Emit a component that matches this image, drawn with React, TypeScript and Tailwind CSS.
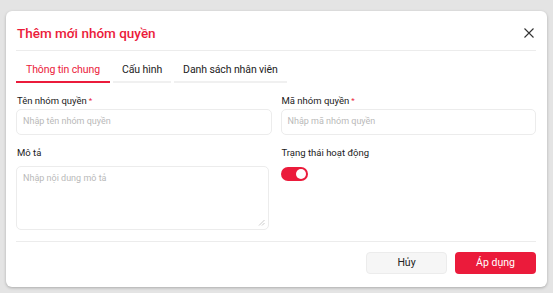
import React from "react";

export default function App() {
  return (
    <div
      className="w-[553px] h-[293px] bg-[#e4e4e4] pt-[11px] pl-[6px]"
      style={{ fontFamily: "Roboto, 'Noto Sans', sans-serif" }}
    >
      <div className="w-[541px] h-[276px] bg-white rounded-[6px] shadow-[0_1px_3px_rgba(0,0,0,0.25)] pl-[10px] pr-[11px] flex flex-col">
        <div className="h-[40px] flex items-center justify-between border-b border-[#ececec] pt-[5px]">
          <div className="text-[13.5px] font-medium text-[#eb1b3b] ml-[1px]">Thêm mới nhóm quyền</div>
          <button className="w-[10px] h-[10px] mr-[2px] text-[#333]">
            <svg viewBox="0 0 10 10" width="10" height="10" fill="none" stroke="currentColor" strokeWidth="1.1">
              <path d="M0.5 0.5 L9.5 9.5 M9.5 0.5 L0.5 9.5" />
            </svg>
          </button>
        </div>
        <div className="flex gap-[3px] mt-[7px]">
          <div className="px-[10px] h-[25px] flex items-center border-b-2 border-[#eb1b3b] text-[10.5px] tracking-[-0.1px] text-[#eb1b3b]">Thông tin chung</div>
          <div className="px-[9px] h-[25px] flex items-center border-b-2 border-[#f0f0f0] text-[10.5px] tracking-[-0.1px] text-[#222]">Cấu hình</div>
          <div className="px-[9px] h-[25px] flex items-center border-b-2 border-[#f0f0f0] text-[10.5px] tracking-[-0.1px] text-[#222]">Danh sách nhân viên</div>
        </div>
        <div className="grid grid-cols-2 gap-x-[9px] mt-[12px]">
          <div className="flex flex-col">
            <label className="text-[9.5px] text-[#222] leading-[12px] pl-[1px]">
              Tên nhóm quyền<span className="text-[#eb1b3b] ml-[2px] align-top text-[8px]">*</span>
            </label>
            <div className="mt-[2px] h-[26px] border border-[#ececec] rounded-[5px] flex items-center px-[6px] text-[9px] text-[#b9b9b9]">
              Nhập tên nhóm quyền
            </div>
          </div>
          <div className="flex flex-col">
            <label className="text-[9.5px] text-[#222] leading-[12px] pl-[1px]">
              Mã nhóm quyền<span className="text-[#eb1b3b] ml-[2px] align-top text-[8px]">*</span>
            </label>
            <div className="mt-[2px] h-[26px] border border-[#ececec] rounded-[5px] flex items-center px-[6px] text-[9px] text-[#b9b9b9]">
              Nhập mã nhóm quyền
            </div>
          </div>
          <div className="flex flex-col mt-[12px]">
            <label className="text-[9.5px] text-[#222] leading-[12px] pl-[1px]">Mô tả</label>
            <div className="relative mt-[7px] h-[64px] w-[253px] border border-[#ececec] rounded-[5px] px-[6px] pt-[5px] text-[9px] text-[#b9b9b9]">
              Nhập nội dung mô tả
              <svg className="absolute right-[3px] bottom-[3px]" width="7" height="7" viewBox="0 0 7 7" fill="none" stroke="#bdbdbd" strokeWidth="0.8">
                <path d="M6.5 1 L1 6.5 M6.5 4 L4 6.5" />
              </svg>
            </div>
          </div>
          <div className="flex flex-col mt-[12px]">
            <label className="text-[9.5px] text-[#222] leading-[12px] pl-[1px]">Trạng thái hoạt động</label>
            <div className="mt-[8px] w-[27px] h-[14px] rounded-full bg-[#eb1b3b] flex items-center justify-end pr-[2px]">
              <div className="w-[10px] h-[10px] rounded-full bg-white" />
            </div>
          </div>
        </div>
        <div className="mt-[11px] border-t border-[#ececec] flex justify-end gap-[8px] pt-[10px]">
          <button className="w-[81px] h-[22px] rounded-[4px] bg-[#f6f6f6] border border-[#ececec] text-[10.5px] text-[#222]">Hủy</button>
          <button className="w-[81px] h-[22px] rounded-[4px] bg-[#eb1b3b] text-[10.5px] text-white">Áp dụng</button>
        </div>
      </div>
    </div>
  );
}
